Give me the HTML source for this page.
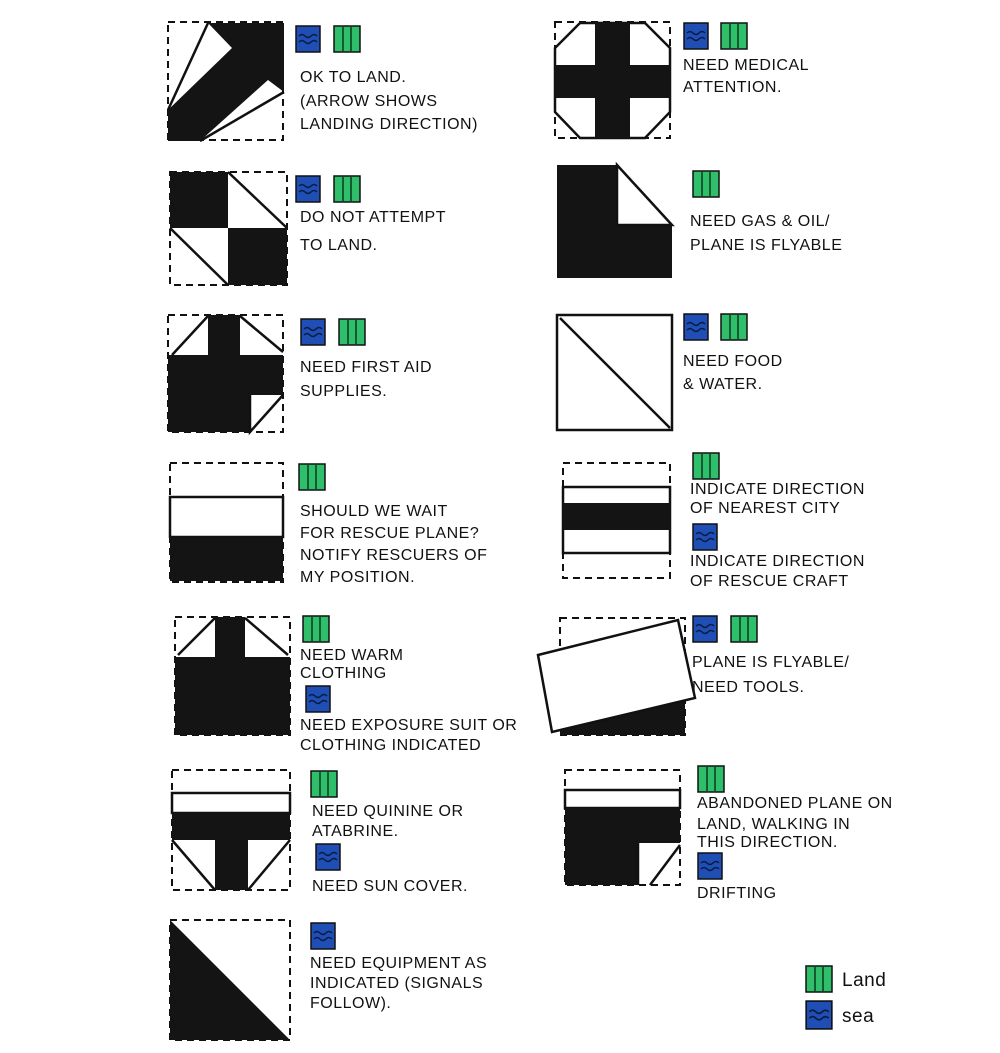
<!DOCTYPE html>
<html><head><meta charset="utf-8"><style>
body{margin:0;background:#fff;width:1000px;height:1053px;overflow:hidden}
svg{position:absolute;left:0;top:0}
text{font-family:"Liberation Sans",sans-serif;font-size:16px;fill:#111;letter-spacing:0.5px}
.d{fill:none;stroke:#111;stroke-width:2;stroke-dasharray:7 5}
.b{fill:#141414}
.w{fill:#fff;stroke:#111;stroke-width:2.5}
.o{fill:none;stroke:#111;stroke-width:2.5}
</style></head><body>
<svg width="1000" height="1053" viewBox="0 0 1000 1053">
<defs>
<symbol id="sea" viewBox="0 0 26 28"><rect x="1" y="1" width="24" height="26" fill="#1f4fb5" stroke="#111" stroke-width="1.5"/><path d="M4 11q3-3 6 0t6 0t6 0M4 17q3-3 6 0t6 0t6 0" stroke="#0a1a40" fill="none" stroke-width="1.5"/></symbol>
<symbol id="land" viewBox="0 0 28 28"><rect x="1" y="1" width="26" height="26" fill="#2fbf6a" stroke="#111" stroke-width="1.5"/><path d="M10 2v24M18 2v24" stroke="#0d3a1e" stroke-width="1.5"/></symbol>
</defs>

<!-- Row1 left -->
<rect class="d" x="168" y="22" width="115" height="118"/>
<polygon class="b" points="208,23 284,23 284,92 268,80 200,141 168,141 168,110 232,48"/>
<polygon class="b" points="168,110 168,141 190,141"/>
<path class="o" d="M208 23L168 110M284 92L200 141"/>
<use href="#sea" x="295" y="25" width="26" height="28"/><use href="#land" x="333" y="25" width="28" height="28"/>
<text x="300" y="82">OK TO LAND.</text><text x="300" y="106">(ARROW SHOWS</text><text x="300" y="129">LANDING DIRECTION)</text>

<!-- Row1 right -->
<rect class="d" x="555" y="22" width="115" height="116"/>
<polygon class="w" points="580,23 645,23 670,48 670,112 645,138 580,138 555,112 555,48"/>
<polygon class="b" points="595,23 630,23 630,65 670,65 670,98 630,98 630,138 595,138 595,98 555,98 555,65 595,65"/>
<use href="#sea" x="683" y="22" width="26" height="28"/><use href="#land" x="720" y="22" width="28" height="28"/>
<text x="683" y="70">NEED MEDICAL</text><text x="683" y="92">ATTENTION.</text>

<!-- Row2 left -->
<rect class="d" x="170" y="172" width="117" height="113"/>
<rect class="b" x="170" y="172" width="58" height="56"/><rect class="b" x="228" y="228" width="59" height="57"/>
<path class="o" d="M228 172L287 228M170 228L228 285"/>
<use href="#sea" x="295" y="175" width="26" height="28"/><use href="#land" x="333" y="175" width="28" height="28"/>
<text x="300" y="222">DO NOT ATTEMPT</text><text x="300" y="250">TO LAND.</text>

<!-- Row2 right -->
<polygon class="b" points="557,165 617,165 617,225 672,225 672,278 557,278"/>
<polygon class="w" points="617,165 672,225 617,225"/>
<use href="#land" x="692" y="170" width="28" height="28"/>
<text x="690" y="226">NEED GAS &amp; OIL/</text><text x="690" y="250">PLANE IS FLYABLE</text>

<!-- Row3 left -->
<rect class="d" x="168" y="315" width="115" height="117"/>
<polygon class="b" points="208,315 240,315 240,355 283,355 283,395 250,395 250,432 168,432 168,355 208,355"/>
<path class="o" d="M208 316L172 355M240 316L283 352M283 395L250 432L250 395"/>
<use href="#sea" x="300" y="318" width="26" height="28"/><use href="#land" x="338" y="318" width="28" height="28"/>
<text x="300" y="372">NEED FIRST AID</text><text x="300" y="396">SUPPLIES.</text>

<!-- Row3 right -->
<rect class="w" x="557" y="315" width="115" height="115"/>
<path class="o" d="M560 318L670 428"/>
<use href="#sea" x="683" y="313" width="26" height="28"/><use href="#land" x="720" y="313" width="28" height="28"/>
<text x="683" y="366">NEED FOOD</text><text x="683" y="389">&amp; WATER.</text>

<!-- Row4 left -->
<rect class="d" x="170" y="463" width="113" height="119"/>
<rect class="w" x="170" y="497" width="113" height="40"/><rect class="b" x="170" y="537" width="113" height="44"/>
<use href="#land" x="298" y="463" width="28" height="28"/>
<text x="300" y="516">SHOULD WE WAIT</text><text x="300" y="538">FOR RESCUE PLANE?</text><text x="300" y="560">NOTIFY RESCUERS OF</text><text x="300" y="582">MY POSITION.</text>

<!-- Row4 right -->
<rect class="d" x="563" y="463" width="107" height="115"/>
<rect class="w" x="563" y="487" width="107" height="66"/><rect class="b" x="563" y="503" width="107" height="27"/>
<use href="#land" x="692" y="452" width="28" height="28"/>
<text x="690" y="494">INDICATE DIRECTION</text><text x="690" y="513">OF NEAREST CITY</text>
<use href="#sea" x="692" y="523" width="26" height="28"/>
<text x="690" y="566">INDICATE DIRECTION</text><text x="690" y="586">OF RESCUE CRAFT</text>

<!-- Row5 left -->
<rect class="d" x="175" y="617" width="115" height="118"/>
<polygon class="b" points="215,617 245,617 245,657 290,657 290,735 175,735 175,657 215,657"/>
<path class="o" d="M215 618L178 655M245 618L288 655"/>
<use href="#land" x="302" y="615" width="28" height="28"/>
<text x="300" y="660">NEED WARM</text><text x="300" y="678">CLOTHING</text>
<use href="#sea" x="305" y="685" width="26" height="28"/>
<text x="300" y="730">NEED EXPOSURE SUIT OR</text><text x="300" y="750">CLOTHING INDICATED</text>

<!-- Row5 right -->
<rect class="d" x="560" y="618" width="125" height="117"/>
<rect class="b" x="560" y="680" width="125" height="55"/>
<polygon class="w" points="538,655 678,620 695,698 552,732"/>
<use href="#sea" x="692" y="615" width="26" height="28"/><use href="#land" x="730" y="615" width="28" height="28"/>
<text x="692" y="667">PLANE IS FLYABLE/</text><text x="692" y="692">NEED TOOLS.</text>

<!-- Row6 left -->
<rect class="d" x="172" y="770" width="118" height="120"/>
<rect class="w" x="172" y="793" width="118" height="20"/>
<polygon class="b" points="172,813 290,813 290,840 248,840 248,890 215,890 215,840 172,840"/>
<path class="o" d="M172 840L215 890M290 840L248 890"/>
<use href="#land" x="310" y="770" width="28" height="28"/>
<text x="312" y="816">NEED QUININE OR</text><text x="312" y="836">ATABRINE.</text>
<use href="#sea" x="315" y="843" width="26" height="28"/>
<text x="312" y="891">NEED SUN COVER.</text>

<!-- Row6 right -->
<rect class="d" x="565" y="770" width="115" height="115"/>
<rect class="w" x="565" y="790" width="115" height="18"/>
<polygon class="b" points="565,808 680,808 680,843 638,843 638,885 565,885"/>
<path class="o" d="M638 843L638 885M680 845L650 885"/>
<use href="#land" x="697" y="765" width="28" height="28"/>
<text x="697" y="808">ABANDONED PLANE ON</text><text x="697" y="829">LAND, WALKING IN</text><text x="697" y="847">THIS DIRECTION.</text>
<use href="#sea" x="697" y="852" width="26" height="28"/>
<text x="697" y="898">DRIFTING</text>

<!-- Row7 -->
<rect class="d" x="170" y="920" width="120" height="120"/>
<polygon class="b" points="170,920 290,1040 170,1040"/>
<use href="#sea" x="310" y="922" width="26" height="28"/>
<text x="310" y="968">NEED EQUIPMENT AS</text><text x="310" y="988">INDICATED (SIGNALS</text><text x="310" y="1008">FOLLOW).</text>

<!-- Legend -->
<use href="#land" x="805" y="965" width="28" height="28"/><text x="842" y="986" style="font-size:19px">Land</text>
<use href="#sea" x="805" y="1000" width="28" height="30"/><text x="842" y="1022" style="font-size:19px">sea</text>
</svg>
</body></html>
